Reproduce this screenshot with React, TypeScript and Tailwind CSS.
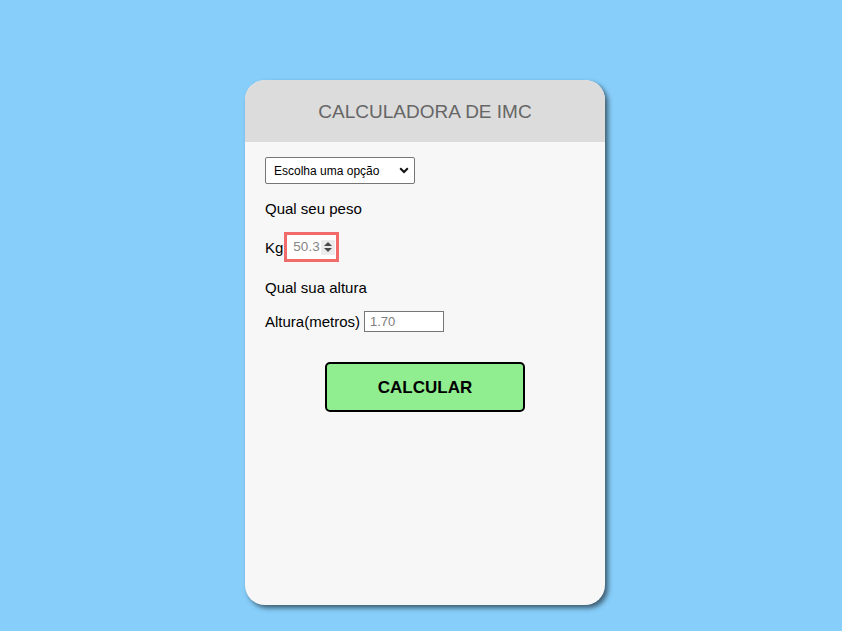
import React from "react";

export default function App() {
  return (
    <div className="min-h-screen w-full bg-[#87cefa] flex justify-center pl-[8px] pt-[80px] font-['Liberation_Sans',Arial,sans-serif]">
      <div className="w-[360px] h-[525px] rounded-[20px] bg-[#f7f7f7] shadow-[3px_3px_5px_rgba(0,0,0,0.55)] overflow-hidden flex flex-col">
        <div className="h-[62px] bg-[#dcdcdc] flex items-center justify-center shrink-0">
          <h1 className="text-[19px] leading-none text-[#666666] tracking-[0px]">CALCULADORA DE IMC</h1>
        </div>
        <div className="px-[20px] pt-[15px] flex flex-col items-start">
          <div className="w-[150px] h-[27px] border border-[#767676] rounded-[2px] bg-white flex items-center justify-between pl-[8px] pr-[5px]">
            <span className="text-[12px] text-black leading-none">Escolha uma opção</span>
            <svg width="10" height="7" viewBox="0 0 10 7">
              <path d="M1.2 1.2 L5 5 L8.8 1.2" fill="none" stroke="#111" strokeWidth="2" />
            </svg>
          </div>
          <p className="mt-[16px] text-[15px] leading-[17px] text-black">Qual seu peso</p>
          <div className="mt-[15px] h-[30px] flex items-center">
            <span className="text-[15px] leading-[17px] text-black">Kg</span>
            <div className="ml-[1px] w-[55px] h-[30px] border-[3px] border-[#f26b6b] bg-white flex items-center pl-[6px]">
              <span className="text-[13.5px] leading-none text-[#858585]">50.3</span>
              <div className="ml-[1px] w-[14px] h-[15px] bg-[#ececec] flex flex-col items-center justify-center gap-[2px]">
                <svg width="8" height="4" viewBox="0 0 8 4">
                  <path d="M0 4 L4 0 L8 4 Z" fill="#4a4a4a" />
                </svg>
                <svg width="8" height="4" viewBox="0 0 8 4">
                  <path d="M0 0 L8 0 L4 4 Z" fill="#4a4a4a" />
                </svg>
              </div>
            </div>
          </div>
          <p className="mt-[17px] text-[15px] leading-[17px] text-black">Qual sua altura</p>
          <div className="mt-[15px] flex items-center">
            <span className="text-[15px] leading-[17px] text-black">Altura(metros)</span>
            <div className="ml-[4px] w-[80px] h-[21px] border border-[#767676] bg-white flex items-center pl-[5px]">
              <span className="text-[13px] leading-none text-[#7d7d7d]">1.70</span>
            </div>
          </div>
          <div className="mt-[30px] w-full flex justify-center">
            <button className="w-[200px] h-[50px] bg-[#90ee90] border-2 border-black rounded-[5px] text-[17px] font-bold text-black leading-none">
              CALCULAR
            </button>
          </div>
        </div>
      </div>
    </div>
  );
}
